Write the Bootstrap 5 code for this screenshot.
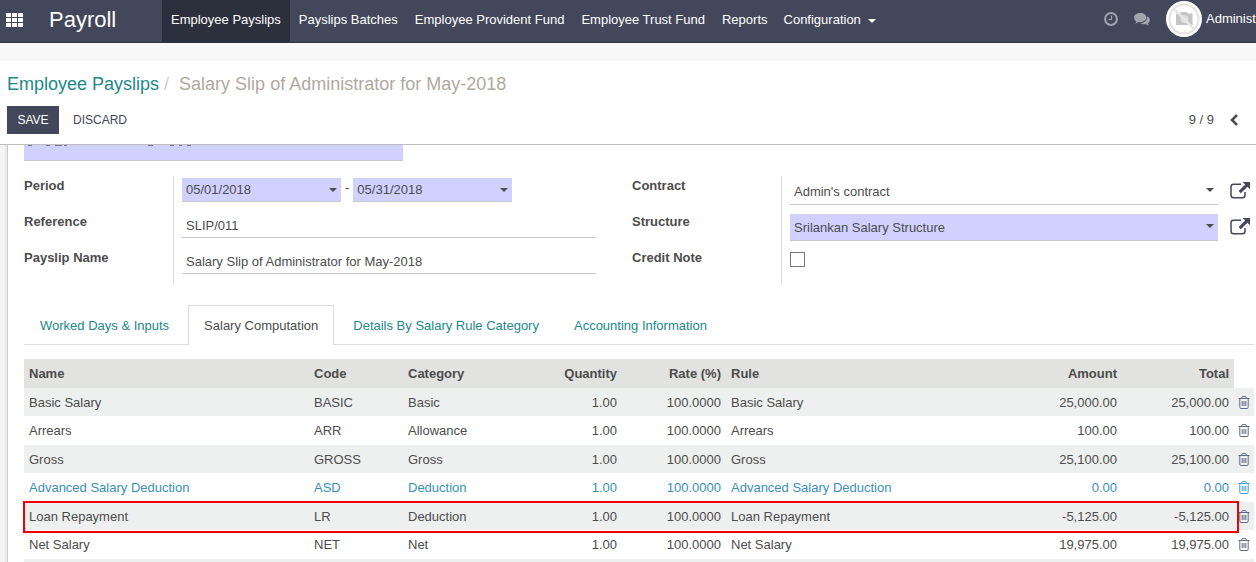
<!DOCTYPE html>
<html lang="en">
<head>
<meta charset="utf-8">
<meta name="viewport" content="width=device-width, initial-scale=1">
<title>Payroll - Salary Slip</title>
<link href="https://cdn.jsdelivr.net/npm/bootstrap@5.3.0/dist/css/bootstrap.min.css" rel="stylesheet">
<style>
:root { --ink:#4c4c4c; --navy:#43475a; --teal:#21888a; --required:#d1d1ff; --rule:#c8c8c8; }
body { font-family:"Liberation Sans",Arial,sans-serif; font-size:13px; line-height:20px; color:var(--ink); background:#fff; }
.topbar { height:43px; background:var(--navy); border-bottom:1px solid #332f45; color:#fff; }
.topbar a { color:#fff; text-decoration:none; }
.apps-btn { padding:0 6px 3px; line-height:0; }
.app-brand { width:133px; padding-left:20px; }
.topbar .app-brand a { font-size:22px; line-height:40px; }
.menu-item { padding:10px 8px 12px; height:42px; white-space:nowrap; }
.menu-item.roomy { padding-left:9px; padding-right:9px; }
.menu-item.active { background:#2c303c; }
.caret { display:inline-block; border:4px solid transparent; border-top-color:currentColor; border-bottom:0; }
.user-name { width:54px; padding-left:4px; white-space:nowrap; }
.strip { height:18px; background:#f9f9f9; }
.control-panel { border-bottom:1px solid #bdbdbd; padding:10px 7px; height:84px; }
.crumbs { font-size:18px; line-height:26px; }
.crumbs a { color:var(--teal); text-decoration:none; }
.crumbs .sep { color:#ccc; padding:0 10px 0 5px; }
.crumbs .here { color:#b0a9a1; }
.tools { margin-top:9px; }
.tool { border:0; border-radius:0; font-size:12px; line-height:16px; padding:6px 10px; height:28px; min-width:52px; }
.tool-save, .tool-save:hover { background:var(--navy); color:#fff; }
.tool-text { color:var(--navy); padding-left:14px; }
.pager-btn { padding:0 11px 2px 16px; }
.sheet-area { background:linear-gradient(90deg,#f4f4f4 0 4px,#e6e6e6 7px); padding-left:7px; }
.sheet { background:#fff; border-left:1px solid #ccc; padding:0 2px 0 16px; min-width:0; }
.fld { display:block; width:100%; border:0; border-bottom:1px solid var(--rule); border-radius:0; padding:1px 4px 0; height:26px; color:var(--ink); background-color:#fff; font-size:13px; line-height:20px; outline:0; }
.fld.req { background-color:var(--required); }
.title-wrap { position:relative; width:379px; max-width:100%; }
.title-wrap .fld { height:45px; margin-top:-29px; font-size:26px; }
.title-wrap svg { position:absolute; left:0; bottom:15px; }
select.fld { appearance:none; }
.picker { position:relative; }
.picker .caret { position:absolute; right:4px; top:10px; pointer-events:none; }
.dates { padding-top:2px; }
.dates .picker { flex:0 1 159px; min-width:0; }
.dates .fld { height:24px; padding-top:0; }
.tall .picker { padding-top:2px; }
.tall .caret { top:12px; }
.tall .fld { height:27px; }
.groups { display:grid; grid-template-columns:572fr 622fr; column-gap:36px; padding-top:15px; }
.grp-row { display:flex; height:36px; }
.grp-row:last-child { height:37px; }
.grp-row > label, .grp-row > .lbl { width:149px; flex:none; font-weight:bold; }
.grp-val { flex:1; min-width:0; border-left:1px solid #ddd; padding-left:8px; display:flex; }
.ext { width:36px; height:28px; padding:0 0 0 12px; border:0; background:none; color:var(--navy); line-height:0; text-align:left; }
.form-check-input.credit { width:15px; height:15px; margin:4px 0 0; border:1px solid #777; border-radius:0; }
.tabs { border-bottom:1px solid #ddd; margin-top:20px; gap:3px; }
.tabs .nav-link { border:1px solid transparent; border-bottom:0; border-radius:0; padding:10px 15px; height:39px; color:var(--teal); }
.tabs .nav-link.active { border-color:#ddd; color:var(--ink); height:40px; margin-bottom:-1px; background:#fff; }
.lines { width:100%; table-layout:fixed; margin-top:14px; }
.lines th, .lines td { padding:0 5px; white-space:nowrap; line-height:20px; }
.lines td { padding-top:1px; }
.lines th { background:#e2e2e0; }
.lines th.blank { background:#fff; }
.lines thead tr, .lines tbody tr:nth-child(even) { height:29px; }
.lines tbody tr { height:28px; }
.lines tbody tr:nth-child(odd) { background:#eef0ef; }
.lines .fresh { color:#3a8fb7; }
.lines td.act { padding:0 4px; line-height:0; }
.act button { border:0; background:none; padding:0; color:#5f6a87; line-height:0; }
.act svg { display:block; }
.fresh .act button { color:#3a9fd0; }
.marked { position:relative; }
.mark-box { position:absolute; inset:-1px 15px -3px -1px; border:2px solid #f00000; pointer-events:none; }
.col-code, .col-qty { width:94px; }
.col-cat { width:125px; }
.col-rate { width:104px; }
.col-amt { width:111px; }
.col-total { width:112px; }
.col-act { width:20px; }
</style>
</head>
<body class="d-flex flex-column vh-100 overflow-hidden">
<svg class="d-none" aria-hidden="true">
  <symbol id="trash" viewBox="0 0 12 13"><path fill="none" stroke="currentColor" d="M.5 2.500h11M3.500 2.500l.8-1.900h3.400l.8 1.900M1.800 2.500v8.700q0 1.300 1.200 1.300h6q1.200 0 1.200-1.300V2.500M4.200 5v5M6 5v5M7.800 5v5"/></symbol>
  <symbol id="external" viewBox="0 0 20 17"><path fill="none" stroke="currentColor" stroke-width="1.500" d="M11 2.300H3.600Q1 2.300 1 4.800V13q0 2.800 2.800 2.800h8.400q2.800 0 2.800-2.800v-3"/><path fill="currentColor" d="M12.500 0H20v7.300l-2.600-2.600-6.600 6.600-2.200-2.200 6.600-6.600z"/></symbol>
</svg>

<header class="topbar d-flex flex-shrink-0">
  <button class="btn border-0 rounded-0 apps-btn" aria-label="Applications"><svg width="17" height="14" viewBox="0 0 17 14" fill="#fff"><path d="M0 0h5v4H0zM6 0h5v4H6zM12 0h5v4h-5zM0 5h5v4H0zM6 5h5v4H6zM12 5h5v4h-5zM0 10h5v4H0zM6 10h5v4H6zM12 10h5v4h-5z"/></svg></button>
  <div class="app-brand flex-shrink-0"><a href="#">Payroll</a></div>
  <nav class="d-flex">
    <a class="menu-item roomy active" href="#">Employee Payslips</a>
    <a class="menu-item roomy" href="#">Payslips Batches</a>
    <a class="menu-item" href="#">Employee Provident Fund</a>
    <a class="menu-item roomy" href="#">Employee Trust Fund</a>
    <a class="menu-item" href="#">Reports</a>
    <a class="menu-item" href="#">Configuration <span class="caret ms-1 align-middle"></span></a>
  </nav>
  <div class="d-flex align-items-center ms-auto pb-1">
    <a href="#" class="me-3 lh-1" aria-label="Activities"><svg width="14" height="14" viewBox="0 0 14 14" fill="none" stroke="#a1a3ad"><circle cx="7" cy="7" r="5.900" stroke-width="2"/><path d="M7.500 3.500v4H4.500" stroke-width="1.200"/></svg></a>
    <a href="#" class="me-3 lh-1" aria-label="Messages"><svg width="16" height="13" viewBox="0 0 16 13" fill="#a1a3ad"><path d="M6.200 0C9.700 0 12.400 2 12.400 4.600S9.700 9.200 6.200 9.200q-.9 0-1.700-.1Q3 10.400.9 10.600q1.100-1.100 1.300-2.300Q0 7 0 4.600C0 2 2.700 0 6.200 0z"/><path d="M13.300 3.300Q16 4.700 16 7q0 2-2 3.300.3 1.200 1.400 2.300-2.100-.2-3.600-1.500-3 .6-5.400-.9 6.500 0 6.900-6.900z"/></svg></a>
    <a href="#" class="d-flex align-items-center"><svg width="36" height="36" viewBox="0 0 36 36"><circle cx="18" cy="18" r="18" fill="#fff"/><circle cx="18" cy="18" r="14.500" fill="none" stroke="#e2e2e2" stroke-width="2"/><path fill="#c4c4c4" d="M10 12.500h4l1.500-1.500h5l1.500 1.500h4.500V24H10z"/><circle cx="18.500" cy="18" r="4" fill="#dedede"/><path d="M8 8l20 20" stroke="#e6e6e6" stroke-width="2.500"/></svg><span class="user-name">Administ</span></a>
  </div>
</header>
<div class="strip flex-shrink-0"></div>

<section class="control-panel flex-shrink-0">
  <nav class="crumbs" aria-label="Breadcrumb"><a href="#">Employee Payslips</a><span class="sep">/</span><span class="here">Salary Slip of Administrator for May-2018</span></nav>
  <div class="tools d-flex align-items-center">
    <button class="btn tool tool-save">SAVE</button>
    <button class="btn tool tool-text">DISCARD</button>
    <span class="ms-auto">9 / 9</span>
    <button class="btn border-0 lh-1 pager-btn" aria-label="Previous"><svg width="8" height="12" viewBox="0 0 8 12" fill="none" stroke="#4c4c4c" stroke-width="2.500"><path d="M7 1L2 6l5 5"/></svg></button>
  </div>
</section>

<main class="sheet-area flex-grow-1 overflow-hidden d-flex">
  <form class="sheet flex-grow-1">
    <div class="title-wrap"><input class="fld req" aria-label="Employee" value=""><svg width="170" height="1" fill="#77778c" aria-hidden="true"><path d="M4 0h4v1H4zM22 0h4v1h-4zM31 0h7v1h-7zM40 0h3v1h-3zM124 0h5v1h-5zM146 0h4v1h-4zM155 0h3v1h-3zM163 0h4v1h-4z"/></svg></div>
    <div class="groups">
      <div>
        <div class="grp-row"><span class="lbl">Period</span>
          <div class="grp-val dates">
            <div class="picker"><input class="fld req" aria-label="Date from" value="05/01/2018"><span class="caret"></span></div>
            <span class="px-1">-</span>
            <div class="picker"><input class="fld req" aria-label="Date to" value="05/31/2018"><span class="caret"></span></div>
          </div></div>
        <div class="grp-row"><label for="ref">Reference</label><div class="grp-val"><input id="ref" class="fld" value="SLIP/011"></div></div>
        <div class="grp-row"><label for="pname">Payslip Name</label><div class="grp-val"><input id="pname" class="fld" value="Salary Slip of Administrator for May-2018"></div></div>
      </div>
      <div>
        <div class="grp-row"><label for="contract">Contract</label><div class="grp-val tall"><div class="picker flex-grow-1"><select id="contract" class="fld"><option>Admin's contract</option></select><span class="caret"></span></div><button type="button" class="ext" aria-label="Open contract"><svg width="20" height="17"><use href="#external"/></svg></button></div></div>
        <div class="grp-row"><label for="struct">Structure</label><div class="grp-val tall"><div class="picker flex-grow-1"><select id="struct" class="fld req"><option>Srilankan Salary Structure</option></select><span class="caret"></span></div><button type="button" class="ext" aria-label="Open structure"><svg width="20" height="17"><use href="#external"/></svg></button></div></div>
        <div class="grp-row"><label for="credit">Credit Note</label><div class="grp-val"><input id="credit" type="checkbox" class="form-check-input credit"></div></div>
      </div>
    </div>
    <nav class="nav tabs">
      <a class="nav-link" href="#">Worked Days &amp; Inputs</a>
      <a class="nav-link active" href="#">Salary Computation</a>
      <a class="nav-link" href="#">Details By Salary Rule Category</a>
      <a class="nav-link" href="#">Accounting Information</a>
    </nav>
    <table class="lines">
      <colgroup><col><col class="col-code"><col class="col-cat"><col class="col-qty"><col class="col-rate"><col><col class="col-amt"><col class="col-total"><col class="col-act"></colgroup>
      <thead><tr><th>Name</th><th>Code</th><th>Category</th><th class="text-end">Quantity</th><th class="text-end">Rate (%)</th><th>Rule</th><th class="text-end">Amount</th><th class="text-end">Total</th><th class="blank"></th></tr></thead>
      <tbody>
        <tr><td>Basic Salary</td><td>BASIC</td><td>Basic</td><td class="text-end">1.00</td><td class="text-end">100.0000</td><td>Basic Salary</td><td class="text-end">25,000.00</td><td class="text-end">25,000.00</td><td class="act"><button type="button" aria-label="Delete"><svg width="12" height="13"><use href="#trash"/></svg></button></td></tr>
        <tr><td>Arrears</td><td>ARR</td><td>Allowance</td><td class="text-end">1.00</td><td class="text-end">100.0000</td><td>Arrears</td><td class="text-end">100.00</td><td class="text-end">100.00</td><td class="act"><button type="button" aria-label="Delete"><svg width="12" height="13"><use href="#trash"/></svg></button></td></tr>
        <tr><td>Gross</td><td>GROSS</td><td>Gross</td><td class="text-end">1.00</td><td class="text-end">100.0000</td><td>Gross</td><td class="text-end">25,100.00</td><td class="text-end">25,100.00</td><td class="act"><button type="button" aria-label="Delete"><svg width="12" height="13"><use href="#trash"/></svg></button></td></tr>
        <tr class="fresh"><td>Advanced Salary Deduction</td><td>ASD</td><td>Deduction</td><td class="text-end">1.00</td><td class="text-end">100.0000</td><td>Advanced Salary Deduction</td><td class="text-end">0.00</td><td class="text-end">0.00</td><td class="act"><button type="button" aria-label="Delete"><svg width="12" height="13"><use href="#trash"/></svg></button></td></tr>
        <tr class="marked"><td>Loan Repayment<span class="mark-box"></span></td><td>LR</td><td>Deduction</td><td class="text-end">1.00</td><td class="text-end">100.0000</td><td>Loan Repayment</td><td class="text-end">-5,125.00</td><td class="text-end">-5,125.00</td><td class="act"><button type="button" aria-label="Delete"><svg width="12" height="13"><use href="#trash"/></svg></button></td></tr>
        <tr><td>Net Salary</td><td>NET</td><td>Net</td><td class="text-end">1.00</td><td class="text-end">100.0000</td><td>Net Salary</td><td class="text-end">19,975.00</td><td class="text-end">19,975.00</td><td class="act"><button type="button" aria-label="Delete"><svg width="12" height="13"><use href="#trash"/></svg></button></td></tr>
        <tr><td colspan="9"></td></tr>
      </tbody>
    </table>
  </form>
</main>
<script src="https://cdn.jsdelivr.net/npm/bootstrap@5.3.0/dist/js/bootstrap.bundle.min.js"></script>
</body>
</html>
